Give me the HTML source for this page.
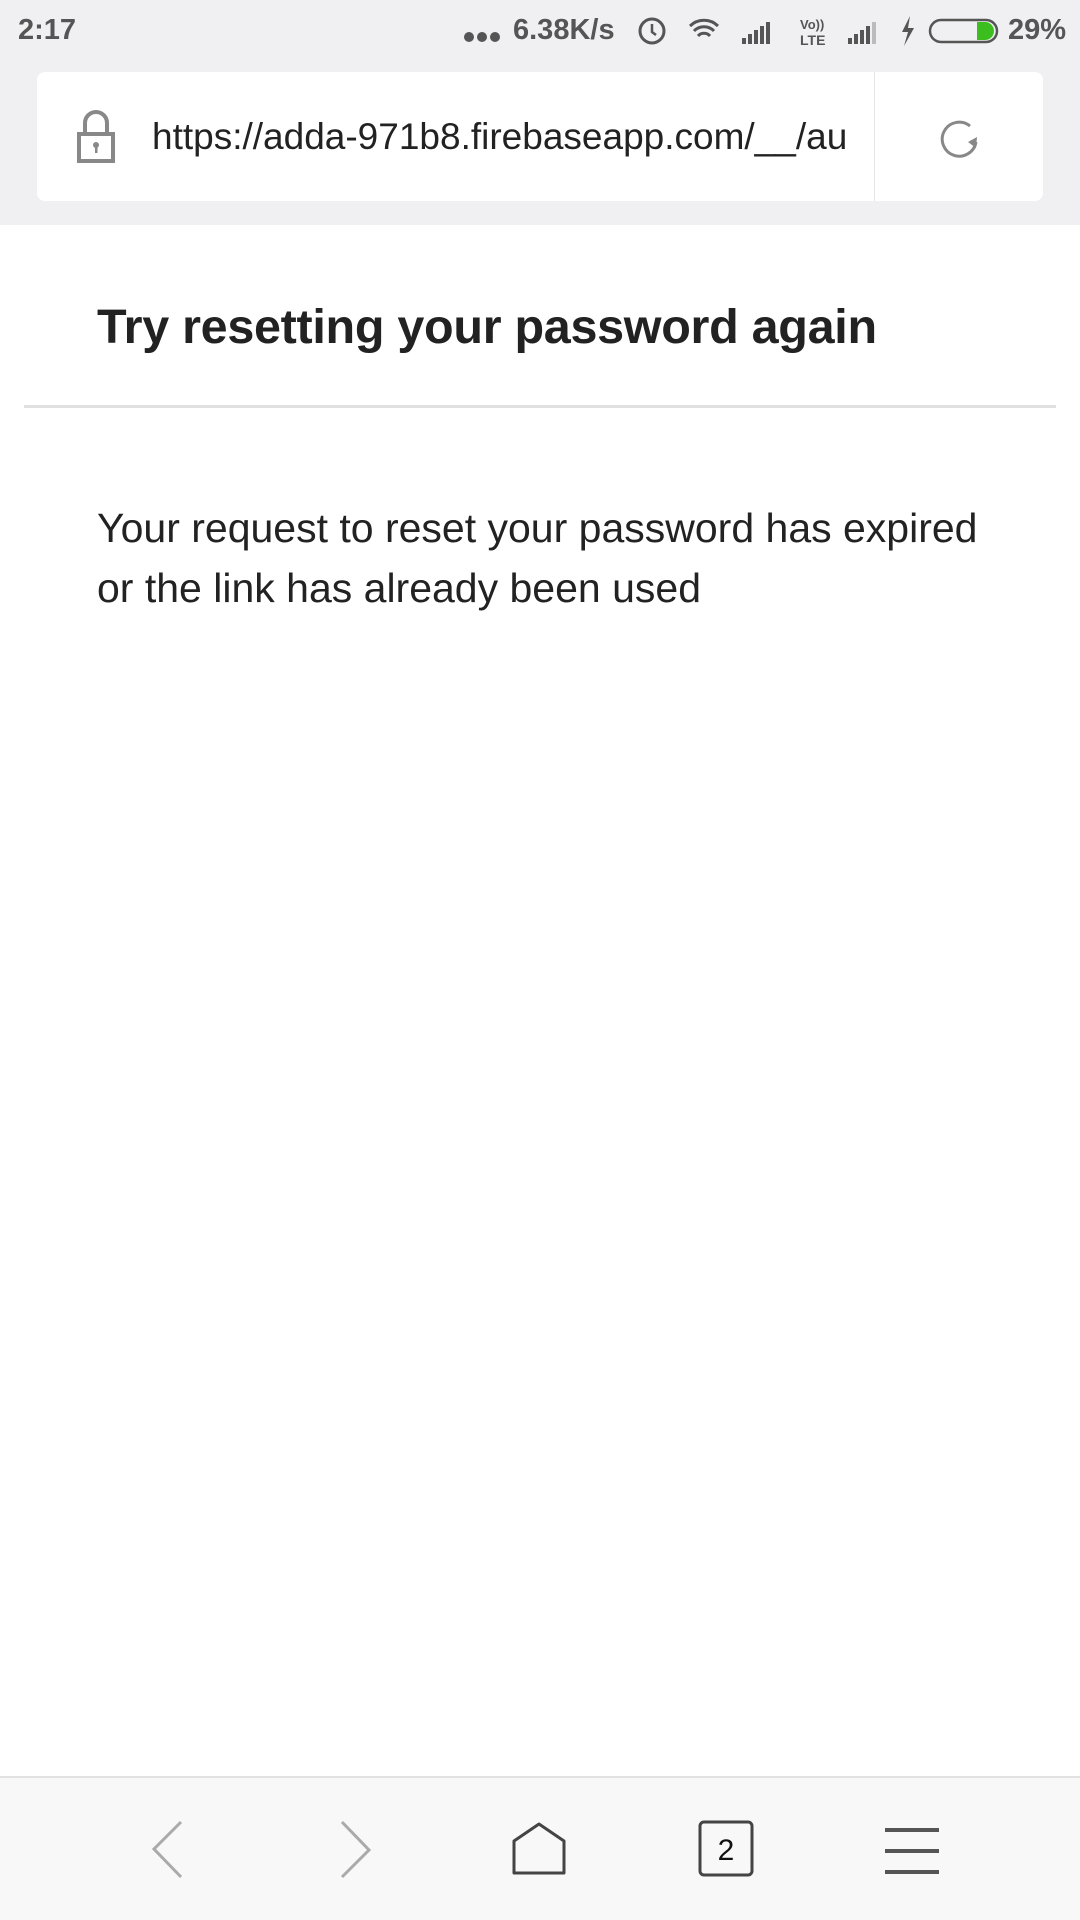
<!DOCTYPE html>
<html><head><meta charset="utf-8"><style>
*{margin:0;padding:0;box-sizing:border-box}
body{width:1080px;height:1920px;background:#fff;font-family:"Liberation Sans",sans-serif;position:relative;overflow:hidden}
.top{position:absolute;left:0;top:0;width:1080px;height:225px;background:#f0f0f2}
.abs{position:absolute}
</style></head><body>
<div class="top"></div>
<div class="abs" style="left:18px;top:14px;font-size:29px;font-weight:bold;color:#555">2:17</div>
<svg class="abs" style="left:463px;top:30px" width="40" height="14" viewBox="0 0 40 14"><circle cx="6" cy="7" r="5" fill="#555"/><circle cx="19" cy="7" r="5" fill="#555"/><circle cx="32" cy="7" r="5" fill="#555"/></svg>
<div class="abs" style="left:513px;top:14px;font-size:29px;font-weight:bold;color:#555">6.38K/s</div>
<svg class="abs" style="left:630px;top:12px" width="420" height="36" viewBox="0 0 420 36">
<circle cx="22" cy="19" r="12" fill="none" stroke="#555" stroke-width="3"/>
<path d="M22 12v8l4 3" stroke="#555" stroke-width="2.5" fill="none"/>
<path d="M60 14a20 20 0 0 1 28 0M64 19a14 14 0 0 1 20 0M68 24a8 8 0 0 1 12 0" stroke="#555" stroke-width="3" fill="none"/>
<path d="M112 32h4v-6h-4zM118 32h4v-10h-4zM124 32h4v-14h-4zM130 32h4v-18h-4zM136 32h4v-22h-4z" fill="#555"/>
<text x="170" y="17" font-size="13" font-weight="bold" fill="#555" font-family="Liberation Sans">Vo))</text>
<text x="170" y="33" font-size="14" font-weight="bold" fill="#555" font-family="Liberation Sans">LTE</text>
<path d="M218 32h4v-6h-4zM224 32h4v-10h-4zM230 32h4v-14h-4zM236 32h4v-18h-4z" fill="#555"/><path d="M242 32h4v-22h-4z" fill="#bbb"/>
<path d="M280 4l-8 16h6l-4 14 10-18h-6z" fill="#555"/>
<rect x="300" y="8" width="67" height="22" rx="11" fill="none" stroke="#555" stroke-width="2.5"/>
<path d="M347 10h8a9 9 0 0 1 0 18h-8z" fill="#3cbe1e"/>
</svg>
<div class="abs" style="left:1008px;top:14px;font-size:29px;font-weight:bold;color:#555">29%</div>
<div class="abs" style="left:37px;top:72px;width:1006px;height:129px;background:#fff;border-radius:8px"></div>
<div class="abs" style="left:874px;top:72px;width:1px;height:129px;background:#e6e6e6"></div>
<svg class="abs" style="left:74px;top:108px" width="46" height="58" viewBox="0 0 46 58">
<path d="M11 26v-11a11 11 0 0 1 22 0v11" stroke="#888" stroke-width="4" fill="none"/>
<rect x="5" y="26" width="34" height="27" fill="none" stroke="#888" stroke-width="4"/>
<circle cx="22" cy="37" r="3" fill="#888"/><rect x="21" y="38" width="2.5" height="7" fill="#888"/>
</svg>
<div class="abs" style="left:152px;top:116px;font-size:37px;color:#222;width:693px;overflow:hidden;white-space:nowrap">https://adda-971b8.firebaseapp.com/__/auth</div>
<svg class="abs" style="left:936px;top:114px" width="48" height="48" viewBox="0 0 48 48">
<path d="M34 12A17 17 0 1 0 40 28" stroke="#888" stroke-width="3" fill="none"/>
<path d="M41 23l-1 11-8-6z" fill="#888"/>
</svg>
<div class="abs" style="left:97px;top:299px;font-size:48.5px;font-weight:bold;color:#222;letter-spacing:-0.3px">Try resetting your password again</div>
<div class="abs" style="left:24px;top:405px;width:1032px;height:3px;background:#e0e0e0"></div>
<div class="abs" style="left:97px;top:498px;font-size:41px;line-height:60px;color:#222;width:980px;white-space:nowrap">Your request to reset your password has expired<br>or the link has already been used</div>
<div class="abs" style="left:0;top:1776px;width:1080px;height:144px;background:#f8f8f8;border-top:2px solid #e2e2e2"></div>
<svg class="abs" style="left:0;top:1800px" width="1080" height="100" viewBox="0 0 1080 100">
<path d="M181 22l-27 27l27 28" stroke="#aaa" stroke-width="3" fill="none"/>
<path d="M342 22l27 28l-27 27" stroke="#aaa" stroke-width="3" fill="none"/>
<path d="M539 24l-25 17v32h50v-32z" stroke="#444" stroke-width="3" fill="none" stroke-linejoin="round"/>
<rect x="700" y="22" width="52" height="53" rx="4" stroke="#444" stroke-width="3" fill="none"/>
<text x="726" y="60" font-size="30" text-anchor="middle" fill="#111" font-family="Liberation Sans">2</text>
<path d="M885 30h54M885 51h54M885 72h54" stroke="#555" stroke-width="4"/>
</svg>
</body></html>
